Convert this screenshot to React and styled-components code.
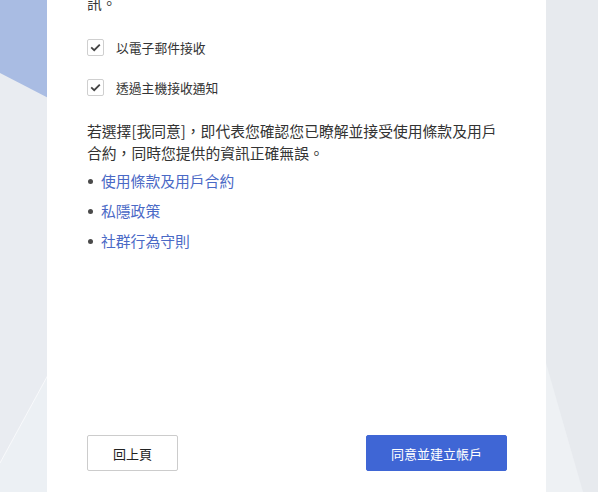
import styled, { createGlobalStyle } from "styled-components";

const GlobalStyle = createGlobalStyle`
  html, body {
    margin: 0;
    padding: 0;
    background: #e7eaee;
  }
  body {
    font-family: "Noto Sans CJK TC", "Liberation Sans", sans-serif;
    color: #333;
  }
`;

const Page = styled.div`
  position: relative;
  height: 492px;
  overflow: hidden;
`;

const Backdrop = styled.svg`
  position: absolute;
  left: 0;
  top: 0;
  width: 100%;
  height: 100%;
  z-index: 0;
`;

const Card = styled.div`
  position: relative;
  z-index: 1;
  margin-left: 47px;
  width: 499px;
  height: 492px;
  box-sizing: border-box;
  padding: 0 39px 21px 40px;
  background: #fff;
  display: flex;
  flex-direction: column;
`;

const Tail = styled.p`
  margin: -8px 0 0;
  font-size: 14.8px;
  line-height: 22px;
`;

const Options = styled.div`
  margin-top: 25px;
  display: flex;
  flex-direction: column;
  gap: 23px;
`;

const CheckRow = styled.label`
  display: flex;
  align-items: center;
  gap: 12px;
  height: 17px;
  font-size: 12.8px;
  color: #333;
`;

const Box = styled.span`
  width: 15px;
  height: 15px;
  border: 1px solid #cfcfcf;
  border-radius: 2px;
  background: #fff;
  display: flex;
  align-items: center;
  justify-content: center;
`;

const Notice = styled.p`
  margin: 24px 0 0;
  font-size: 14.8px;
  line-height: 22px;
  color: #333;
`;

const LinkList = styled.ul`
  list-style: none;
  margin: 6px 0 0;
  padding: 0;
  display: flex;
  flex-direction: column;
  gap: 8px;
`;

const LinkItem = styled.li`
  display: flex;
  align-items: center;
  gap: 8px;
  line-height: 22px;
  font-size: 14.8px;

  &::before {
    content: "";
    width: 5px;
    height: 5px;
    margin-left: 1px;
    border-radius: 50%;
    background: #4a4a4a;
  }

  a {
    color: #4a69c6;
    text-decoration: none;
  }
`;

const Actions = styled.div`
  margin-top: auto;
  display: flex;
  justify-content: space-between;
  align-items: center;
`;

const Button = styled.button`
  height: 36px;
  width: ${(p) => (p.$primary ? "141px" : "91px")};
  border-radius: 2px;
  border: 1px solid ${(p) => (p.$primary ? "#3f66d5" : "#cccccc")};
  background: ${(p) => (p.$primary ? "#3f66d5" : "#fff")};
  color: ${(p) => (p.$primary ? "#fff" : "#222")};
  font-family: "Noto Sans CJK TC", "Liberation Sans", sans-serif;
  font-size: 13px;
  cursor: pointer;
`;

function Check() {
  return (
    <Box>
      <svg width="11" height="9" viewBox="0 0 11 9">
        <path d="M1.2 4.4 L4.2 7.2 L9.8 1.6" fill="none" stroke="#444" strokeWidth="1.8" />
      </svg>
    </Box>
  );
}

export default function App() {
  return (
    <>
      <GlobalStyle />
      <Page>
        <Backdrop viewBox="0 0 598 492" preserveAspectRatio="none">
          <rect x="0" y="0" width="598" height="492" fill="#e7eaee" />
          <rect x="0" y="0" width="60" height="492" fill="#e9ecf1" />
          <polygon points="0,0 60,0 60,104 0,73" fill="#a9bce3" />
          <polygon points="0,463 60,353 60,492 0,492" fill="#ecf0f4" />
          <line x1="0" y1="463" x2="60" y2="353" stroke="#f8f9fb" strokeWidth="1" />
          <polygon points="546,363 583,492 546,492" fill="#eef1f4" />
        </Backdrop>
        <Card>
          <Tail>訊。</Tail>
          <Options>
            <CheckRow>
              <Check />
              以電子郵件接收
            </CheckRow>
            <CheckRow>
              <Check />
              透過主機接收通知
            </CheckRow>
          </Options>
          <Notice>
            若選擇[我同意]，即代表您確認您已瞭解並接受使用條款及用戶
            <br />
            合約，同時您提供的資訊正確無誤。
          </Notice>
          <LinkList>
            <LinkItem><a href="#">使用條款及用戶合約</a></LinkItem>
            <LinkItem><a href="#">私隱政策</a></LinkItem>
            <LinkItem><a href="#">社群行為守則</a></LinkItem>
          </LinkList>
          <Actions>
            <Button>回上頁</Button>
            <Button $primary>同意並建立帳戶</Button>
          </Actions>
        </Card>
      </Page>
    </>
  );
}
